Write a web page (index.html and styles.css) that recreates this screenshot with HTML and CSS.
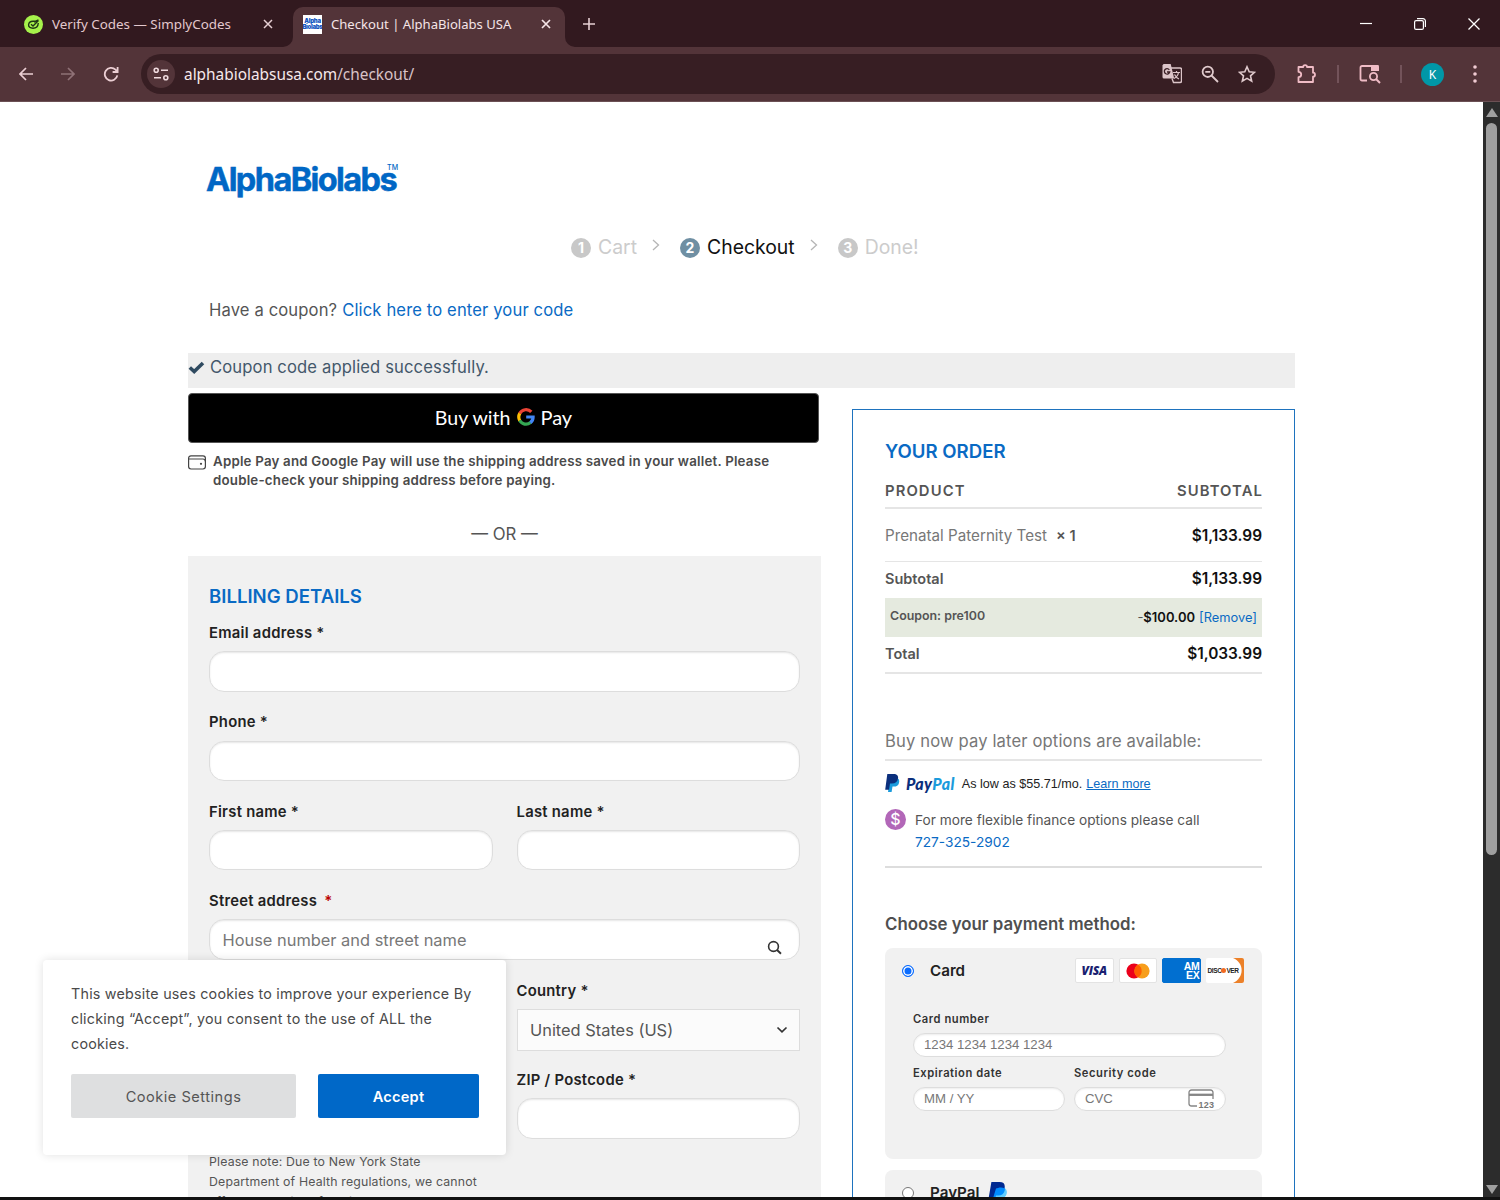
FILE: index.html
```html
<!DOCTYPE html>
<html lang="en">
<head>
<meta charset="utf-8">
<title>Checkout | AlphaBiolabs USA</title>
<link rel="stylesheet" href="styles.css">
</head>
<body>
<div class="window">
  <header class="tabstrip">
    <div class="tab">
      <svg class="favicon" width="19" height="19" viewBox="0 0 19 19"><circle cx="9.500" cy="9.500" r="9.500" fill="#a6f24b"/><path d="M14.300 8c-.3 4-2.500 5.200-5.300 5.200S4.300 11.800 4.600 9.500 7 6.300 9 6.300h2.500M7 9.300l2 1.700 5.500-5.500M10 7l4.500-2" fill="none" stroke="#203515" stroke-width="1.400"/></svg>
      <span class="tab-title">Verify Codes — SimplyCodes</span>
      <svg class="tab-close" width="10" height="10" viewBox="0 0 10 10"><path d="M1 1l8 8M9 1l-8 8" stroke="#e6cfd3" stroke-width="1.500"/></svg>
    </div>
    <div class="tab tab-active">
      <svg class="corner corner-left" width="10" height="10"><path d="M10 0v10H0A10 10 0 0 0 10 0" fill="#533439"/></svg>
      <span class="favicon-alpha"><b>Alpha</b><b>Biolabs</b></span>
      <span class="tab-title">Checkout | AlphaBiolabs USA</span>
      <svg class="tab-close" width="10" height="10" viewBox="0 0 10 10"><path d="M1 1l8 8M9 1l-8 8" stroke="#f5e4e7" stroke-width="1.700"/></svg>
      <svg class="corner corner-right" width="10" height="10"><path d="M0 0v10h10A10 10 0 0 1 0 0" fill="#533439"/></svg>
    </div>
    <svg class="new-tab" width="12" height="12" viewBox="0 0 12 12"><path d="M6 0v12M0 6h12" stroke="#e6cfd3" stroke-width="1.600"/></svg>
    <div class="win-buttons">
      <svg width="12" height="12" viewBox="0 0 12 12"><path d="M0 5.500h12" stroke="#fff" stroke-width="1.200"/></svg>
      <svg width="12" height="12" viewBox="0 0 12 12"><rect x=".6" y="2.600" width="8.800" height="8.800" rx="1.500" fill="none" stroke="#fff" stroke-width="1.200"/><path d="M3 .6h6a2.400 2.400 0 0 1 2.400 2.400v6" fill="none" stroke="#fff" stroke-width="1.200"/></svg>
      <svg width="12" height="12" viewBox="0 0 12 12"><path d="M.5.5l11 11M11.500.5l-11 11" stroke="#fff" stroke-width="1.300"/></svg>
    </div>
  </header>

  <nav class="toolbar">
    <div class="nav-icons">
      <svg width="14" height="14" viewBox="0 0 14 14"><path d="M14 7H1.500M7 1L1 7l6 6" fill="none" stroke="#eccfd4" stroke-width="1.700"/></svg>
      <svg width="14" height="14" viewBox="0 0 14 14"><path d="M0 7h12.500M7 1l6 6-6 6" fill="none" stroke="#8f7176" stroke-width="1.700"/></svg>
      <svg width="16" height="16" viewBox="0 0 16 16"><path d="M14.300 9.300A6.300 6.300 0 1 1 12.500 3.700L14 5.300M14.600 1v5H9.600" fill="none" stroke="#eccfd4" stroke-width="1.800"/></svg>
    </div>
    <div class="omnibox">
      <span class="site-info"><svg width="16" height="14" viewBox="0 0 16 14"><g fill="none" stroke="#f0dbdf" stroke-width="1.600"><circle cx="3.200" cy="3.200" r="2"/><path d="M8 3.200h7M1 10.800h7"/><circle cx="12.800" cy="10.800" r="2"/></g></svg></span>
      <span class="url">alphabiolabsusa.com<span class="url-path">/checkout/</span></span>
      <div class="omni-icons">
        <svg width="20" height="20" viewBox="0 0 20 20"><path d="M1.500 0h7.200l3.500 14.500H2A1.500 1.500 0 0 1 .5 13V1.500Z" fill="#dcc5c9"/><path d="M8.800 4H18a1.500 1.500 0 0 1 1.500 1.500V17a1.500 1.500 0 0 1-1.500 1.500h-6.500L10 14.500" fill="none" stroke="#dcc5c9" stroke-width="1.400"/><path d="M7.300 5.800A2.700 2.700 0 1 0 7.700 8H5" fill="none" stroke="#3b2025" stroke-width="1.300"/><path d="M11 8.500h7M14.500 7v1.500M16.500 8.500c-.5 3-2.500 5-4.500 6M12.500 10.500c1 2 2.500 3.500 4.500 4.500" fill="none" stroke="#dcc5c9" stroke-width="1.200"/></svg>
        <svg width="18" height="18" viewBox="0 0 18 18"><g fill="none" stroke="#e0cacd" stroke-width="1.800"><circle cx="6.800" cy="6.800" r="5.200"/><path d="M10.500 10.500L17 17M4.300 6.800h5"/></g></svg>
        <svg width="18" height="18" viewBox="0 0 18 18"><path d="M9 1.800l2.200 5 5.300.5-4 3.600 1.200 5.300L9 13.400l-4.700 2.800 1.200-5.300-4-3.600 5.300-.5Z" fill="none" stroke="#e0cacd" stroke-width="1.600"/></svg>
      </div>
    </div>
    <svg class="ext" width="20" height="20" viewBox="0 0 20 20"><path d="M1.500 3h4.700a1.900 1.900 0 0 1 3.800 0h6v5.700a2 2 0 0 1 0 4V18H1.500v-4.800a2.700 2.700 0 0 0 0-5.400Z" fill="none" stroke="#f0bcc6" stroke-width="1.800" stroke-linejoin="round"/></svg>
    <i class="bar"></i>
    <svg class="lens" width="22" height="20" viewBox="0 0 22 20"><path d="M8 16.500H3a1.500 1.500 0 0 1-1.500-1.500V3.500A1.500 1.500 0 0 1 3 2h15.500v4" fill="none" stroke="#f0bcc6" stroke-width="1.800"/><path d="M12 1h6.500A1.500 1.500 0 0 1 20 2.500V7h-8Z" fill="#f0bcc6"/><circle cx="14.500" cy="12.500" r="3.600" fill="none" stroke="#f0bcc6" stroke-width="1.800"/><path d="M17 15l4 4" stroke="#f0bcc6" stroke-width="2"/></svg>
    <i class="bar"></i>
    <span class="avatar">K</span>
    <svg class="kebab" width="4" height="18" viewBox="0 0 4 18"><g fill="#f0cbd2"><circle cx="2" cy="2" r="1.800"/><circle cx="2" cy="9" r="1.800"/><circle cx="2" cy="16" r="1.800"/></g></svg>
  </nav>

  <div class="viewport">
    <main class="page">
      <div class="logo"><span>AlphaBiolabs</span><sup>TM</sup></div>
      <div class="steps">
        <span class="step"><b class="num">1</b><span>Cart</span></span>
        <svg class="chev" width="8" height="12" viewBox="0 0 8 12"><path d="M1 1l5.500 5L1 11" fill="none" stroke="#b5b5b5" stroke-width="1.300"/></svg>
        <span class="step step-on"><b class="num">2</b><span>Checkout</span></span>
        <svg class="chev" width="8" height="12" viewBox="0 0 8 12"><path d="M1 1l5.500 5L1 11" fill="none" stroke="#b5b5b5" stroke-width="1.300"/></svg>
        <span class="step"><b class="num">3</b><span>Done!</span></span>
      </div>
      <div class="coupon-ask"><span>Have a coupon?</span><a>Click here to enter your code</a></div>
      <div class="message"><svg width="17" height="13" viewBox="0 0 17 13"><path d="M1.800 6.500l4.400 4L15 2" fill="none" stroke="#2f4a60" stroke-width="3.600"/></svg><span>Coupon code applied successfully.</span></div>

      <div class="columns">
        <section class="left">
          <button class="gpay"><span>Buy with</span>
            <svg width="18" height="18" viewBox="0 0 18 18"><g fill="none" stroke-width="3.200"><path d="M14.300 3.900A7.200 7.200 0 0 0 2.700 5.500" stroke="#ea4335"/><path d="M2.800 5.400a7.200 7.200 0 0 0 0 7.200" stroke="#fbbc04"/><path d="M2.700 12.500a7.200 7.200 0 0 0 10.800 2.100" stroke="#34a853"/><path d="M9.200 9h6.900a7.200 7.200 0 0 1-2.700 5.700" stroke="#4285f4"/></g></svg>
            <span class="pay">Pay</span></button>
          <div class="wallet"><svg width="18" height="15" viewBox="0 0 18 15"><g fill="none" stroke="#444" stroke-width="1.200"><rect x=".6" y=".8" width="16.800" height="13.200" rx="2.400"/><path d="M.8 4h14.200a2.400 2.400 0 0 1 2.400 2.400"/></g><circle cx="13" cy="8.800" r="1.100" fill="#444"/></svg>
            <p>Apple Pay and Google Pay will use the shipping address saved in your wallet. Please<br>double-check your shipping address before paying.</p></div>
          <div class="or">— OR —</div>
          <form class="billing">
            <h2>BILLING DETAILS</h2>
            <label class="field wide"><span>Email address *</span><i class="input"></i></label>
            <label class="field wide"><span>Phone *</span><i class="input"></i></label>
            <label class="field"><span>First name *</span><i class="input"></i></label>
            <label class="field"><span>Last name *</span><i class="input"></i></label>
            <label class="field wide"><span>Street address <em>*</em></span><i class="input"><span>House number and street name</span><svg width="15" height="15" viewBox="0 0 15 15"><circle cx="6.500" cy="6.500" r="4.900" fill="none" stroke="#333" stroke-width="1.600"/><path d="M9.800 9.800l4.200 4" stroke="#333" stroke-width="1.900"/></svg></i></label>
            <div></div>
            <label class="field"><span>Country *</span><i class="input select"><span>United States (US)</span><svg width="12" height="8" viewBox="0 0 12 8"><path d="M1.500 1.500L6 5.800l4.500-4.300" fill="none" stroke="#333" stroke-width="1.700"/></svg></i></label>
            <div></div>
            <label class="field"><span>ZIP / Postcode *</span><i class="input"></i></label>
            <p class="note">Please note: Due to New York State<br>Department of Health regulations, we cannot<br>offer our services for clients based</p>
          </form>
        </section>

        <aside class="order">
          <h2>YOUR ORDER</h2>
          <div class="row row-head"><span>PRODUCT</span><span>SUBTOTAL</span></div>
          <div class="row row-item"><span>Prenatal Paternity Test<b>× 1</b></span><strong>$1,133.99</strong></div>
          <div class="row row-sub"><b>Subtotal</b><strong>$1,133.99</strong></div>
          <div class="row row-coupon"><b>Coupon: pre100</b><span>-<strong>$100.00</strong><a>[Remove]</a></span></div>
          <div class="row row-total"><b>Total</b><strong>$1,033.99</strong></div>
          <p class="later">Buy now pay later options are available:</p>
          <div class="pp-line">
            <svg width="15" height="18" viewBox="0 0 15 18"><path d="M5 4h7c2 .5 2.700 2.500 2 5-.7 2.600-2.500 3.600-5 3.600H7.500L6.600 18H3Z" fill="#1a9bdc"/><path d="M2.300 0h6.200C12 0 13.500 1.800 13 4.600c-.6 3.300-2.600 5-6 5H5L4 15.800H.2Z" fill="#0b2f7d"/></svg>
            <span class="pp-word"><i>Pay</i><i>Pal</i></span>
            <span class="pp-small">As low as $55.71/mo.</span><a class="pp-small">Learn more</a>
          </div>
          <div class="finance"><b class="dollar">$</b><p>For more flexible finance options please call<br><a>727-325-2902</a></p></div>
          <h3>Choose your payment method:</h3>
          <div class="method method-card">
            <div class="method-head">
              <i class="radio radio-on"></i><b>Card</b>
              <span class="brands">
                <span class="brand visa">VISA</span>
                <span class="brand"><svg width="24" height="16" viewBox="0 0 24 16"><circle cx="8" cy="8" r="7.600" fill="#eb001b"/><circle cx="16" cy="8" r="7.600" fill="#f79e1b"/><path d="M12 1.500a7.600 7.600 0 0 1 0 13 7.600 7.600 0 0 1 0-13" fill="#ff5f00"/></svg></span>
                <span class="brand amex"><span>AM</span><span>EX</span></span>
                <span class="brand discover"><svg width="38" height="25" viewBox="0 0 38 25"><path d="M27 0h9a2 2 0 0 1 2 2v21a2 2 0 0 1-2 2h-9c11-5 12-20 0-25" fill="#ec8129"/></svg><span>DISC<i></i>VER</span></span>
              </span>
            </div>
            <div class="card-form">
              <div class="cfield cwide"><b>Card number</b><i class="cinput"><span>1234 1234 1234 1234</span></i></div>
              <div class="cfield"><b>Expiration date</b><i class="cinput"><span>MM / YY</span></i></div>
              <div class="cfield"><b>Security code</b><i class="cinput"><span>CVC</span><svg width="27" height="20" viewBox="0 0 27 20"><path d="M9 17H3.500A2.500 2.500 0 0 1 1 14.500V3.500A2.500 2.500 0 0 1 3.500 1h19A2.500 2.500 0 0 1 25 3.500V10" fill="none" stroke="#858585" stroke-width="1.300"/><path d="M1 5.800h24" stroke="#858585" stroke-width="2.300"/><text x="10.500" y="18.500" class="cvc-num" textLength="15.500">123</text></svg></i></div>
            </div>
          </div>
          <div class="method"><div class="method-head">
            <i class="radio"></i><b>PayPal</b>
            <svg class="pp-mark" width="19" height="22" viewBox="0 0 19 22"><path d="M6 6h10c2.500.8 3.400 3 2.600 6-.9 3-3 4.400-6 4.400h-3L8.500 22H4Z" fill="#60cdff"/><path d="M5 5h11c1 .8 1 2 .8 3.200-.8 3.600-3 5.300-6.500 5.300H8L6.500 19H2Z" fill="#008cff"/><path d="M3.400 0h8.200c4 0 5.700 2.200 5 5.500l-.2.700C13 4.500 9.500 6 8 6.500L6 13 4.600 17.500H.4Z" fill="#002991"/></svg>
          </div></div>
        </aside>
      </div>
      <div class="cookie">
        <p>This website uses cookies to improve your experience By<br>clicking “Accept”, you consent to the use of ALL the<br>cookies.</p>
        <div class="cookie-actions"><button class="btn-grey">Cookie Settings</button><button class="btn-blue">Accept</button></div>
      </div>
    </main>
    <div class="scrollbar"><i class="arrow-up"></i><i class="thumb"></i><i class="arrow-down"></i></div>
  </div>
</div>
</body>
</html>
```
FILE: styles.css
```css
* { box-sizing: border-box; }
body { margin: 0; font-family: Inter, sans-serif; color: #555; }
i, em { font-style: normal; }
p, h2, h3 { margin: 0; white-space: nowrap; }
button { border: 0; padding: 0; font-family: inherit; }
svg { flex: none; display: block; }
a { color: #0a6ac4; text-decoration: none; }
span, b, strong, a { white-space: nowrap; }

.window { width: 1500px; height: 1200px; display: flex; flex-direction: column; overflow: hidden; background: #111; }

/* browser chrome */
.tabstrip { height: 47px; flex: none; background: #32191f; display: flex; align-items: flex-start; font-family: "Noto Sans", sans-serif; }
.tab { width: 293px; height: 47px; display: flex; align-items: center; padding: 1px 20px 0 24px; color: #e3c8cd; font-size: 13.400px; }
.tab-title { margin-left: 9px; }
.tab-close { margin-left: auto; }
.tab-active { position: relative; width: 272px; height: 40px; margin-top: 7px; padding: 0 14px 6px 10px; border-radius: 10px 10px 0 0; background: #533439; color: #f5e4e7; font-size: 13.100px; }
.corner { position: absolute; bottom: 0; }
.corner-left { left: -10px; }
.corner-right { right: -10px; }
.favicon-alpha { width: 19px; height: 19px; background: #fff; display: flex; flex-direction: column; align-items: center; justify-content: center; font: 700 6px/6px Inter, sans-serif; letter-spacing: -.3px; color: #1155c0; overflow: hidden; }
.new-tab { margin: 18px 0 0 18px; }
.win-buttons { margin: 18px 20px 0 auto; display: flex; gap: 42px; }
.toolbar { height: 55px; flex: none; background: #533439; display: flex; align-items: center; border-bottom: 1px solid #6b5054; font-family: "Noto Sans", sans-serif; }
.nav-icons { width: 141px; padding-left: 19px; display: flex; align-items: center; gap: 28px; }
.omnibox { width: 1134px; height: 40px; border-radius: 20px; background: #371e23; display: flex; align-items: center; padding: 0 19px 0 6px; }
.site-info { width: 28px; height: 28px; border-radius: 50%; background: #533439; display: flex; align-items: center; justify-content: center; }
.url { margin-left: 9px; font-size: 15.400px; color: #f6e9eb; }
.url-path { color: #d9c3c7; }
.omni-icons { margin-left: auto; display: flex; align-items: center; gap: 19px; }
.ext { margin-left: 22px; }
.bar { width: 2px; height: 18px; margin: 0 20px; background: #73535a; }
.lens + .bar { margin: 0 19px; }
.avatar { width: 23px; height: 23px; border-radius: 50%; background: #0097a7; color: #fff; font-size: 12px; line-height: 23px; text-align: center; }
.kebab { margin-left: 29px; }

/* page */
.viewport { height: 1095px; display: flex; overflow: hidden; background: #fff; }
.page { position: relative; width: 1483px; padding: 60px 188px 0; overflow: hidden; }
.logo { height: 36px; padding-left: 18px; font-size: 32.500px; line-height: 36px; font-weight: 700; letter-spacing: -1.600px; color: #0067c5; display: flex; -webkit-text-stroke: .5px #0067c5; }
.logo sup { font-size: 7px; line-height: 12px; height: 12px; font-weight: 500; letter-spacing: 0; margin-left: -9px; -webkit-text-stroke: 0; }
.steps { height: 30px; margin: 34px 0 0 383px; display: flex; align-items: center; font-size: 19.400px; color: #ccc; }
.step { display: flex; align-items: center; gap: 7px; }
.step-on { color: #111; }
.num { width: 20px; height: 20px; border-radius: 50%; background: #c8c8c8; color: #fff; font-size: 14px; line-height: 20px; text-align: center; margin-top: 2px; }
.step-on .num { background: #6f8fa3; }
.chev { margin: -4px 20px 0 15px; }
.coupon-ask { height: 30px; margin: 33px 0 0 21px; display: flex; gap: 5px; font-size: 16.600px; letter-spacing: .13px; line-height: 30px; }
.message { height: 35px; margin-top: 28px; padding-bottom: 7px; width: 1107px; background: #eee; color: #44586b; display: flex; align-items: center; gap: 5px; font-size: 16.600px; letter-spacing: .13px; }
.columns { display: grid; grid-template-columns: 633px 443px; column-gap: 31px; align-items: start; }
.left { padding-top: 5px; }
.gpay { width: 631px; height: 50px; background: #000; border: 1px solid #555; border-radius: 4px; color: #fff; display: flex; align-items: center; justify-content: center; padding-bottom: 2px; font: 19.600px Lato, sans-serif; }
.gpay svg { margin: -1px 5px 0 7px; }
.pay { font-size: 20px; }
.wallet { height: 57px; padding-top: 9px; display: flex; gap: 7px; font-size: 13.300px; letter-spacing: .21px; line-height: 19px; font-weight: 600; color: #4a4a4a; }
.wallet svg { margin-top: 3px; }
.or { height: 56px; padding-top: 19px; text-align: center; font-size: 16.800px; line-height: 30px; }
.billing { height: 700px; background: #f1f1f1; padding: 25px 21px 0; display: grid; grid-template-columns: 283.500px 283.500px; column-gap: 24px; align-content: start; }
.billing h2 { grid-column: 1 / -1; font-size: 18.600px; line-height: 30px; font-weight: 600; color: #0a6ac4; }
.field { height: 89.400px; padding-top: 12px; display: flex; flex-direction: column; color: #222; font-size: 14.800px; letter-spacing: .27px; line-height: 20px; font-weight: 600; }
.field em { color: #b00; margin-left: 3px; }
.wide { grid-column: 1 / -1; }
.input { height: 40.500px; margin-top: 8.200px; border: 1px solid #ddd; border-radius: 15px; background: #fff; box-shadow: inset 0 1px 2px rgba(0,0,0,.1); display: flex; align-items: center; justify-content: space-between; padding: 0 17px 0 12.500px; font-size: 16.400px; letter-spacing: 0; font-weight: 400; color: #777; }
.input svg { margin-top: 15px; }
.select { height: 42px; margin-top: 8px; border-radius: 0; background: #fbfbfb; box-shadow: none; color: #555; padding-right: 11px; }
.select svg { margin: 0; }
.note { font-size: 12.300px; letter-spacing: .17px; line-height: 20px; padding-top: 5px; }

.order { margin-top: 21px; height: 900px; border: 1px solid #1e73be; padding: 26px 32px 0; }
.order h2 { font-size: 18.600px; line-height: 30px; font-weight: 600; color: #0a6ac4; }
.row { display: flex; align-items: center; justify-content: space-between; font-size: 14.800px; }
.row b { color: #555; font-weight: 600; font-size: 14.500px; }
.row strong { color: #111; font-weight: 600; font-size: 15.400px; }
.row-head { height: 43px; padding-top: 8px; border-bottom: 2px solid #e5e5e5; font-weight: 600; color: #555; letter-spacing: 1.100px; }
.row-head span + span { margin-right: -1px; }
.row-item { height: 53px; border-bottom: 1px solid #e5e5e5; color: #777; font-size: 15.200px; }
.row-item b { margin-left: 9px; }
.row-sub { height: 36px; padding-bottom: 3px; }
.row-sub b, .row-total b { padding-bottom: 1px; }
.row-coupon { height: 39px; background: #e5eadf; padding: 0 5px 1px; font-size: 13px; }
.row-coupon b { font-size: 12.400px; padding-bottom: 4px; }
.row-coupon strong { font-size: 13px; }
.row-coupon a { margin-left: 4px; font-size: 12.850px; }
.row-total { height: 37px; padding-bottom: 2px; border-bottom: 2px solid #e5e5e5; }
.later { height: 87px; padding-top: 52px; font-size: 16.600px; letter-spacing: .14px; line-height: 30px; border-bottom: 2px solid #e5e5e5; color: #777; }
.pp-line { height: 44px; display: flex; align-items: center; color: #222; }
.pp-word { margin: 0 7px 0 6px; font: italic 900 16px Lato, sans-serif; letter-spacing: .4px; color: #0b2f7d; }
.pp-word i { font-style: italic; }
.pp-word i + i { color: #1a9bdc; }
.pp-small { font: 12.600px "Liberation Sans", sans-serif; margin-top: 1px; }
a.pp-small { margin-left: 4px; text-decoration: underline; }
.finance { height: 63px; padding-top: 4px; display: flex; gap: 9px; font-size: 13.700px; line-height: 22px; border-bottom: 2px solid #ddd; }
.dollar { width: 21px; height: 21px; border-radius: 50%; background: #b267b8; color: #fff; font-size: 16px; line-height: 21px; font-weight: 500; text-align: center; }
.order h3 { height: 80px; padding-top: 41px; font-size: 16.850px; line-height: 30px; font-weight: 600; color: #4f4f4f; }
.method { background: #f1f1f1; border-radius: 8px; }
.method-card { height: 211px; margin-bottom: 11px; }
.method-head { height: 45px; display: flex; align-items: center; padding: 0 18px 0 17px; font-size: 15.200px; color: #222; }
.method-head > b { margin-left: 16px; font-weight: 600; }
.radio { width: 12px; height: 12px; border: 1px solid #777; border-radius: 50%; background: #fff; }
.radio-on { border: 1px solid #0a6cff; background: #0a6cff; box-shadow: inset 0 0 0 1.500px #fff; }
.pp-mark { margin-left: 9px; }
.brands { margin-left: auto; display: flex; gap: 5px; }
.brand { width: 38.500px; height: 25px; background: #fff; border: 1px solid #e3e3e3; border-radius: 2px; display: flex; align-items: center; justify-content: center; }
.visa { font: italic 800 12px "Open Sans", sans-serif; color: #1a1f71; letter-spacing: -.2px; }
.amex { background: #016fd0; border-color: #016fd0; flex-direction: column; align-items: flex-end; font: 700 10.500px/9px "Liberation Sans", sans-serif; color: #fff; letter-spacing: -.3px; }
.discover { position: relative; border: 0; font: 700 6.500px "Liberation Sans", sans-serif; color: #222; letter-spacing: -.4px; }
.discover > span { position: absolute; left: 2px; display: flex; align-items: center; }
.discover i { width: 5px; height: 5px; border-radius: 50%; background: #f26a21; }
.card-form { padding: 17px 36px 0 28px; display: grid; grid-template-columns: 152px 152px; column-gap: 9px; }
.cwide { grid-column: 1 / -1; }
.cfield { height: 54px; display: flex; flex-direction: column; font-size: 11.200px; letter-spacing: .55px; line-height: 19px; color: #333; }
.cfield b { font-weight: 600; }
.cinput { height: 24px; flex: none; margin-top: 4px; border: 1px solid #ddd; border-radius: 12px; background: #fff; box-shadow: inset 0 1px 2px rgba(0,0,0,.08); padding: 0 10px 1px; display: flex; align-items: center; justify-content: space-between; font: 13.200px "Liberation Sans", sans-serif; letter-spacing: 0; color: #777; }
.cvc-num { font: 700 9px "Liberation Sans", sans-serif; fill: #777; }

.cookie { position: absolute; left: 43px; top: 858px; width: 463px; height: 195px; padding: 21px 27px 0 28px; background: #fff; border-radius: 4px; box-shadow: 0 0 10px rgba(0,0,0,.12); }
.cookie p { font-size: 14.300px; letter-spacing: .23px; line-height: 25.200px; color: #4a4a4a; }
.cookie-actions { margin-top: 17.400px; display: flex; gap: 22px; }
.cookie button { height: 44px; padding-top: 1px; border-radius: 2px; font-size: 14.600px; letter-spacing: .5px; }
.btn-grey { width: 225px; background: #dedfe0; color: #555; }
.btn-blue { width: 161px; background: #0068c8; color: #fff; font-weight: 600; }
.cookie .btn-blue { letter-spacing: .2px; }

.scrollbar { width: 17px; background: #2c2c2c; display: flex; flex-direction: column; align-items: center; padding: 6px 0 3px; }
.arrow-up { border: 6px solid transparent; border-top: 0; border-bottom: 9px solid #9f9f9f; }
.thumb { width: 11px; height: 732px; margin-top: 6px; border-radius: 6px; background: #9f9f9f; }
.arrow-down { margin-top: auto; border: 6px solid transparent; border-bottom: 0; border-top: 9px solid #9f9f9f; }
```
